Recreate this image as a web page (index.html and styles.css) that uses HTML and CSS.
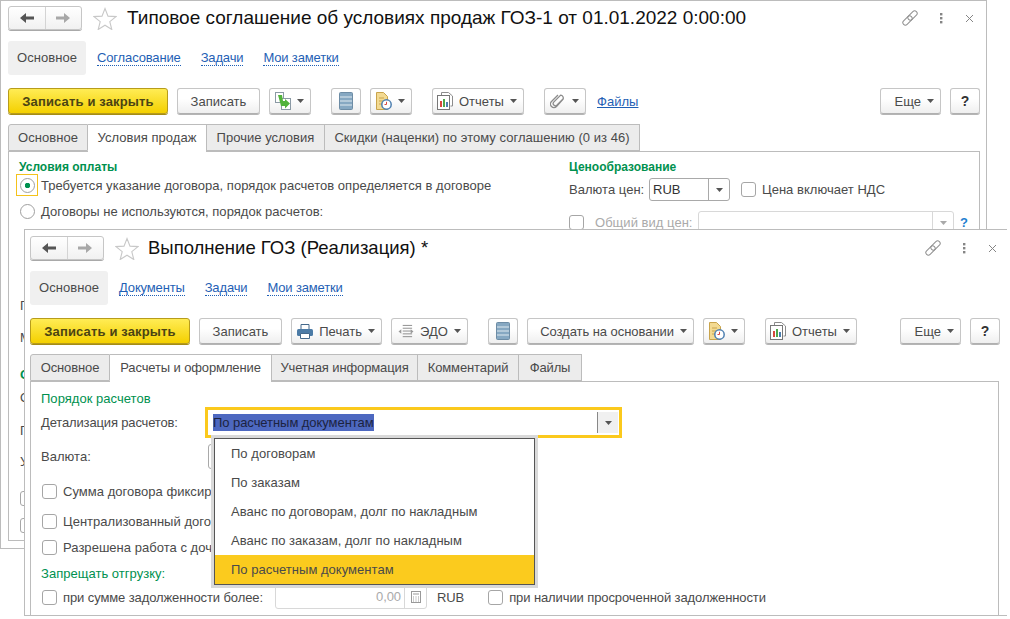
FILE: index.html
```html
<!DOCTYPE html>
<html lang="ru">
<head>
    <meta charset="UTF-8">
    <title>Выполнение ГОЗ (Реализация)</title>
    <link rel="stylesheet" href="styles.css">
</head>
<body>
    <svg class="icon-defs" width="0" height="0">
        <symbol id="i-back" viewBox="0 0 14 12"><path d="M0 6 6 1v3.400h8v3.200H6V11z"/></symbol>
        <symbol id="i-forward" viewBox="0 0 14 12"><path d="M14 6 8 1v3.400H0v3.200h8V11z"/></symbol>
        <symbol id="i-star" viewBox="0 0 24 23"><path d="M12 1.500l3 7.600 8 .5-6.200 5.100 2 7.800L12 18.200 5.200 22.500l2-7.800L1 9.600l8-.5z" fill="none" stroke="#c8c8c8" stroke-width="1.100"/></symbol>
        <symbol id="i-link" viewBox="0 0 16 16"><g fill="none" stroke="#8f8f8f"><rect x="0" y="8" width="11" height="5" rx="2.500" transform="rotate(-45 5.500 10.500)"/><rect x="5" y="3" width="11" height="5" rx="2.500" transform="rotate(-45 10.500 5.500)"/></g></symbol>
        <symbol id="i-dots" viewBox="0 0 4 12"><g fill="#858585"><rect x="1" y="1" width="2.400" height="2.400"/><rect x="1" y="5" width="2.400" height="2.400"/><rect x="1" y="9" width="2.400" height="2.400"/></g></symbol>
        <symbol id="i-close" viewBox="0 0 9 9"><path d="M1 1l7 7M8 1 1 8" stroke="#858585" fill="none" stroke-width="1"/></symbol>
        <symbol id="i-caret" viewBox="0 0 7 4"><path d="M0 0h7L3.500 4z" fill="#555"/></symbol>
        <symbol id="i-copy" viewBox="0 0 16 18"><g fill="#fff" stroke="#8b9aa5"><rect x=".5" y=".5" width="8" height="10"/><rect x="6.500" y="6.500" width="9" height="11"/></g><path d="M3 3h4l1 6h2V7l5 4.500-5 5V14H6z" fill="#52b33b"/></symbol>
        <symbol id="i-list" viewBox="0 0 14 18"><rect x=".5" y=".5" width="13" height="17" rx="1" fill="#86a8c2" stroke="#6d8ca5"/><path d="M1 5h12M1 9h12M1 13h12" stroke="#dfe9f0" stroke-width="1.200"/></symbol>
        <symbol id="i-dated" viewBox="0 0 16 18"><path d="M.5.5h7l4 4v13H.5z" fill="#f3da92" stroke="#c9a44c"/><path d="M3 6h5M3 9h4M3 12h3" stroke="#c9a44c"/><circle cx="10.500" cy="12.500" r="4.700" fill="#fff" stroke="#4d7fb0" stroke-width="1.500"/><path d="M10.500 9.800v2.700H8.500" stroke="#d9473c" fill="none"/></symbol>
        <symbol id="i-reports" viewBox="0 0 16 18"><path d="M4.500 3V.5h7l4 3.500v10h-2" fill="#fff" stroke="#8c8c8c"/><rect x=".5" y="3.500" width="12" height="14" fill="#fff" stroke="#777"/><rect x="3" y="9" width="2" height="6" fill="#d9473c"/><rect x="6" y="7" width="2" height="8" fill="#4fa64a"/><rect x="9" y="10" width="2" height="5" fill="#4d7fb0"/></symbol>
        <symbol id="i-clip" viewBox="0 0 16 16"><path d="M13.500 5.500 6.800 12.200a2.200 2.200 0 0 1-3.100-3.100l7-7a3 3 0 0 1 2.400 4L6.500 13.500a3.500 3.500 0 0 1-5-5L8 2" fill="none" stroke="#8b8b8b" stroke-width="1.300"/></symbol>
        <symbol id="i-print" viewBox="0 0 16 15"><path d="M4 .5h8v5H4z" fill="#fff" stroke="#44698c"/><rect x="0" y="5" width="16" height="7" rx="1.500" fill="#4c7ba6"/><path d="M3.500 9.500h9v5h-9z" fill="#fff" stroke="#44698c"/></symbol>
        <symbol id="i-edo" viewBox="0 0 16 16"><path d="M4.500 1.500h10M4.500 4.500h10M4.500 7.500h10M4.500 10.500h10M4.500 13.500h10" stroke="#8a8a8a"/><path d="M0 8l3-2.500v5zM16 8l-3-2.500v5z" fill="#9a9a9a"/></symbol>
        <symbol id="i-calc" viewBox="0 0 10 12"><rect x=".5" y=".5" width="9" height="11" fill="none" stroke="#999"/><path d="M2 3h6M2 6h1M4.500 6h1M7 6h1M2 8h1M4.500 8h1M7 8h1M2 10h1M4.500 10h1M7 10h1" stroke="#999"/></symbol>
    </svg>

    <!-- первое окно -->
    <section class="window window-back">
        <div class="win-head">
            <div class="nav-group">
                <button class="nav-btn"><svg class="icon-nav nav-on"><use href="#i-back"/></svg></button>
                <button class="nav-btn"><svg class="icon-nav nav-off"><use href="#i-forward"/></svg></button>
            </div>
            <svg class="icon-star"><use href="#i-star"/></svg>
            <h1 class="win-title">Типовое соглашение об условиях продаж ГОЗ-1 от 01.01.2022 0:00:00</h1>
            <div class="win-tools">
                <svg class="icon-link"><use href="#i-link"/></svg>
                <svg class="icon-dots"><use href="#i-dots"/></svg>
                <svg class="icon-close"><use href="#i-close"/></svg>
            </div>
        </div>
        <nav class="sections">
            <span class="section-current">Основное</span>
            <a class="section-link">Согласование</a>
            <a class="section-link">Задачи</a>
            <a class="section-link">Мои заметки</a>
        </nav>
        <div class="toolbar">
            <button class="btn btn-main">Записать и закрыть</button>
            <button class="btn btn-plain w-83">Записать</button>
            <button class="btn w-42"><svg class="icon-18"><use href="#i-copy"/></svg><svg class="caret"><use href="#i-caret"/></svg></button>
            <button class="btn btn-plain w-30 far"><svg class="icon-list"><use href="#i-list"/></svg></button>
            <button class="btn w-42"><svg class="icon-18"><use href="#i-dated"/></svg><svg class="caret"><use href="#i-caret"/></svg></button>
            <button class="btn w-92 far"><svg class="icon-18"><use href="#i-reports"/></svg>Отчеты<svg class="caret"><use href="#i-caret"/></svg></button>
            <button class="btn w-42 far"><svg class="icon-clip"><use href="#i-clip"/></svg><svg class="caret"><use href="#i-caret"/></svg></button>
            <a class="files-link">Файлы</a>
            <button class="btn w-61 push">Еще<svg class="caret"><use href="#i-caret"/></svg></button>
            <button class="btn btn-plain btn-help">?</button>
        </div>
        <div class="tabs">
            <span class="tab tab-w80">Основное</span>
            <span class="tab tab-active tab-w119">Условия продаж</span>
            <span class="tab tab-w118">Прочие условия</span>
            <span class="tab tab-w315">Скидки (наценки) по этому соглашению (0 из 46)</span>
        </div>
        <div class="panel panel-back">
            <div class="col-left">
                <div class="group-title group-bold">Условия оплаты</div>
                <label class="radio-row radio-row-focus"><span class="radio-focus"><span class="radio radio-on"></span></span>Требуется указание договора, порядок расчетов определяется в договоре</label>
                <label class="radio-row"><span class="radio"></span>Договоры не используются, порядок расчетов:</label>
                <div class="covered">
                    <span>П</span>
                    <span>М</span>
                    <span class="covered-green">С</span>
                    <span>О</span>
                    <span>П</span>
                    <span>У</span>
                    <span class="check"></span>
                    <span class="check"></span>
                </div>
            </div>
            <div class="col-right">
                <div class="group-title group-bold">Ценообразование</div>
                <div class="price-row">
                    <span class="label">Валюта цен:</span>
                    <div class="select select-rub"><span class="select-value">RUB</span><span class="select-btn"><svg class="caret"><use href="#i-caret"/></svg></span></div>
                    <span class="check"></span>
                    <span>Цена включает НДС</span>
                </div>
                <div class="price-row price-row-off">
                    <span class="check"></span>
                    <span class="label-off">Общий вид цен:</span>
                    <div class="select select-off"><span class="select-value"></span><span class="select-btn"><svg class="caret caret-off"><use href="#i-caret"/></svg></span></div>
                    <span class="hint">?</span>
                </div>
            </div>
        </div>
    </section>

    <!-- второе окно -->
    <section class="window window-front">
        <div class="win-head">
            <div class="nav-group">
                <button class="nav-btn"><svg class="icon-nav nav-on"><use href="#i-back"/></svg></button>
                <button class="nav-btn"><svg class="icon-nav nav-off"><use href="#i-forward"/></svg></button>
            </div>
            <svg class="icon-star"><use href="#i-star"/></svg>
            <h1 class="win-title win-title-small">Выполнение ГОЗ (Реализация) *</h1>
            <div class="win-tools">
                <svg class="icon-link"><use href="#i-link"/></svg>
                <svg class="icon-dots"><use href="#i-dots"/></svg>
                <svg class="icon-close"><use href="#i-close"/></svg>
            </div>
        </div>
        <nav class="sections">
            <span class="section-current">Основное</span>
            <a class="section-link">Документы</a>
            <a class="section-link">Задачи</a>
            <a class="section-link">Мои заметки</a>
        </nav>
        <div class="toolbar">
            <button class="btn btn-main">Записать и закрыть</button>
            <button class="btn btn-plain w-83">Записать</button>
            <button class="btn w-91"><svg class="icon-print"><use href="#i-print"/></svg>Печать<svg class="caret"><use href="#i-caret"/></svg></button>
            <button class="btn w-77"><svg class="icon-print"><use href="#i-edo"/></svg>ЭДО<svg class="caret"><use href="#i-caret"/></svg></button>
            <button class="btn btn-plain w-30 far"><svg class="icon-list"><use href="#i-list"/></svg></button>
            <button class="btn w-167 btn-tight">Создать на основании<svg class="caret"><use href="#i-caret"/></svg></button>
            <button class="btn w-42"><svg class="icon-18"><use href="#i-dated"/></svg><svg class="caret"><use href="#i-caret"/></svg></button>
            <button class="btn w-92 far"><svg class="icon-18"><use href="#i-reports"/></svg>Отчеты<svg class="caret"><use href="#i-caret"/></svg></button>
            <button class="btn w-61 push">Еще<svg class="caret"><use href="#i-caret"/></svg></button>
            <button class="btn btn-plain btn-help">?</button>
        </div>
        <div class="tabs">
            <span class="tab tab-w80">Основное</span>
            <span class="tab tab-active tab-w162">Расчеты и оформление</span>
            <span class="tab tab-w146">Учетная информация</span>
            <span class="tab tab-w101">Комментарий</span>
            <span class="tab tab-w63">Файлы</span>
        </div>
        <div class="panel panel-front">
            <div class="settle-form">
                <div class="group-title">Порядок расчетов</div>
                <div class="form-row">
                    <span class="label-wide">Детализация расчетов:</span>
                    <div class="select-focus">
                        <span class="select-value"><span class="selected-text">По расчетным документам</span></span>
                        <span class="select-btn"><svg class="caret"><use href="#i-caret"/></svg></span>
                    </div>
                </div>
                <div class="form-row">
                    <span class="label-currency">Валюта:</span>
                    <div class="select select-covered"></div>
                </div>
                <label class="form-row"><span class="check"></span>Сумма договора фиксир</label>
                <label class="form-row"><span class="check"></span>Централизованный догов</label>
                <label class="form-row"><span class="check"></span>Разрешена работа с доч</label>
                <div class="group-title">Запрещать отгрузку:</div>
                <div class="form-row form-row-debt">
                    <span class="check"></span>
                    <span class="debt-label">при сумме задолженности более:</span>
                    <div class="number-field"><span class="number-value">0,00</span><span class="number-btn"><svg class="icon-calc"><use href="#i-calc"/></svg></span></div>
                    <span class="currency">RUB</span>
                    <span class="check"></span>
                    <span>при наличии просроченной задолженности</span>
                </div>
            </div>
            <ul class="dropdown">
                <li>По договорам</li>
                <li>По заказам</li>
                <li>Аванс по договорам, долг по накладным</li>
                <li>Аванс по заказам, долг по накладным</li>
                <li class="dropdown-current">По расчетным документам</li>
            </ul>
        </div>
    </section>
</body>
</html>
```

FILE: styles.css
```css
* {
    box-sizing: border-box;
}

html, body {
    margin: 0;
    height: 619px;
    overflow: hidden;
    background: #fff;
}

body {
    font-family: "Liberation Sans", Arial, sans-serif;
    font-size: 13px;
    letter-spacing: .03px;
    color: #4a4a4a;
}

.icon-defs {
    position: absolute;
}

/* окна лежат друг на друге */
.window {
    position: absolute;
    background: #fff;
    border: 1px solid #bcbcbc;
    padding-right: 6px;
}

.window-back {
    left: 0;
    top: 0;
    width: 987px;
    height: 549px;
    padding-left: 7px;
}

.window-front {
    left: 24px;
    top: 229px;
    width: 983px;
    height: 387px;
    padding-left: 5px;
    padding-right: 7px;
    border-right: 0;
}

/* шапка */
.win-head {
    display: flex;
    align-items: center;
    height: 24px;
    margin-top: 5px;
}

.window-front .win-head {
    margin-top: 6px;
}

.nav-group {
    display: flex;
    width: 74px;
    height: 24px;
    border: 1px solid #c6c6c6;
    border-radius: 3px;
    box-shadow: 0 1px 0 #a9a9a9;
    background: linear-gradient(#fff, #f1f1f1);
}

.nav-btn {
    flex: 1;
    padding: 0;
    border: 0;
    background: none;
    display: flex;
    align-items: center;
    justify-content: center;
}

.nav-btn + .nav-btn {
    border-left: 1px solid #d4d4d4;
}

.icon-nav {
    width: 14px;
    height: 12px;
}

.nav-on {
    fill: #555;
}

.nav-off {
    fill: #a8a8a8;
}

.icon-star {
    width: 24px;
    height: 23px;
    margin-left: 11px;
}

.win-title {
    margin: 0 0 0 10px;
    font-size: 19px;
    font-weight: normal;
    letter-spacing: 0;
    color: #111;
    white-space: nowrap;
}

.win-title-small {
    margin-left: 9px;
    font-size: 18.500px;
}

.win-tools {
    display: flex;
    align-items: center;
    margin-left: auto;
}

.window-front .win-tools {
    margin-right: -3px;
}

.icon-link {
    width: 16px;
    height: 16px;
}

.icon-dots {
    width: 4px;
    height: 12px;
    margin-left: 21px;
}

.icon-close {
    width: 9px;
    height: 9px;
    margin: 0 6px 0 22px;
}

/* разделы */
.sections {
    display: flex;
    align-items: center;
    height: 34px;
    margin-top: 11px;
}

.section-current {
    width: 78px;
    height: 34px;
    line-height: 34px;
    text-align: center;
    background: #f0f0f0;
    border-radius: 3px;
    margin-right: 11px;
}

.section-link {
    margin-right: 20px;
    letter-spacing: -.15px;
    color: #1f5fb5;
    border-bottom: 1px dotted #1f5fb5;
    line-height: 14px;
}

/* кнопки */
.toolbar {
    display: flex;
    align-items: center;
    gap: 9px;
    height: 26px;
    margin-top: 13px;
}

.btn {
    display: flex;
    flex: none;
    align-items: center;
    justify-content: flex-end;
    gap: 6px;
    height: 26px;
    padding: 0 6px 0 0;
    border: 1px solid #c6c6c6;
    border-bottom-color: #b0b0b0;
    border-radius: 3px;
    box-shadow: 0 1px 0 #b5b5b5;
    background: linear-gradient(#fff 40%, #efefef);
    font: inherit;
    letter-spacing: inherit;
    color: #4a4a4a;
}

.btn-plain,
.btn-main {
    justify-content: center;
    padding: 0;
}

.btn-main {
    width: 160px;
    border-color: #b79c1b;
    box-shadow: 0 1px 0 #a58c14;
    background: linear-gradient(#ffec55, #f4d000);
    font-weight: bold;
    letter-spacing: .15px;
    color: #4b4413;
}

.btn-help {
    width: 30px;
    font-size: 14px;
    font-weight: bold;
    color: #333;
}

.btn-tight {
    letter-spacing: -.05px;
}

.far {
    margin-left: 11px;
}

.push {
    margin-left: auto;
}

.w-30 { width: 30px; }
.w-42 { width: 42px; }
.w-61 { width: 61px; }
.w-77 { width: 77px; }
.w-83 { width: 83px; }
.w-91 { width: 91px; }
.w-92 { width: 92px; }
.w-167 { width: 167px; }

.caret {
    width: 7px;
    height: 4px;
    flex: none;
}

.caret-off {
    opacity: .5;
}

.icon-18 {
    width: 16px;
    height: 18px;
}

.icon-list {
    width: 14px;
    height: 18px;
}

.icon-clip {
    width: 16px;
    height: 16px;
}

.icon-print {
    width: 16px;
    height: 15px;
}

.files-link {
    margin-left: 2px;
    color: #1f5fb5;
    text-decoration: underline;
}

/* вкладки */
.tabs {
    display: flex;
    height: 27px;
    margin-top: 10px;
}

.tab {
    height: 27px;
    line-height: 26px;
    text-align: center;
    background: #ececec;
    border: 1px solid #bcbcbc;
    border-left: 0;
    white-space: nowrap;
}

.window-front .tab {
    letter-spacing: -.12px;
}

.tab:first-child {
    border-left: 1px solid #bcbcbc;
    border-radius: 3px 0 0 0;
}

.tab-active {
    position: relative;
    z-index: 1;
    height: 28px;
    background: #fff;
    border-bottom: 0;
}

.tab-w63 { width: 63px; }
.tab-w80 { width: 80px; }
.tab-w101 { width: 101px; }
.tab-w118 { width: 118px; }
.tab-w119 { width: 119px; }
.tab-w146 { width: 146px; }
.tab-w162 { width: 162px; }
.tab-w315 { width: 315px; }

.panel {
    position: relative;
    border: 1px solid #bcbcbc;
}

.panel-back {
    display: flex;
    width: 972px;
    height: 390px;
}

.panel-front {
    width: 969px;
    height: 234px;
    border-bottom: 0;
}

.group-title {
    color: #00914f;
    line-height: 16px;
}

.group-bold {
    font-size: 12px;
    font-weight: bold;
    letter-spacing: 0;
}

/* первое окно, форма */
.col-left {
    width: 560px;
    padding: 7px 0 0 8px;
}

.col-left .group-title {
    margin-left: 2px;
}

.radio-row {
    display: flex;
    align-items: center;
    gap: 6px;
    height: 22px;
    margin-bottom: 4px;
    padding-left: 3px;
    white-space: nowrap;
}

.radio-row-focus {
    gap: 3px;
    margin-top: -1px;
    padding-left: 0;
}

.radio-focus {
    display: flex;
    align-items: center;
    justify-content: center;
    width: 22px;
    height: 22px;
    margin-left: -1px;
    border: 1px solid #f4c21b;
}

.radio {
    width: 15px;
    height: 15px;
    border: 1px solid #9f9f9f;
    border-radius: 50%;
    background: #fff;
}

.radio-on {
    background: radial-gradient(circle, #00914f 0 2.500px, #fff 3px);
}

.covered {
    display: grid;
    grid-template-rows: 20px 32px 37px 23px 33px 31px 34px 27px;
    margin-top: 74px;
    padding-left: 3px;
    line-height: 20px;
}

.covered > span {
    align-self: end;
}

.covered-green {
    color: #00914f;
    font-weight: bold;
}

.col-right {
    padding: 7px 0 0 0;
}

.price-row {
    display: flex;
    align-items: center;
    height: 23px;
    margin-top: 3px;
    white-space: nowrap;
}

.price-row .check {
    margin: 0 6px 0 11px;
}

.price-row-off {
    margin-top: 10px;
}

.price-row-off .check {
    margin: 0 11px 0 0;
}

.label {
    width: 80px;
}

.label-off {
    width: 103px;
    color: #aaa;
}

.select {
    display: flex;
    flex: none;
    height: 23px;
    border: 1px solid #a9a9a9;
    border-radius: 3px;
    background: #fff;
}

.select-rub {
    width: 81px;
    color: #333;
}

.select-off {
    width: 256px;
    border-color: #d8d8d8;
}

.select-value {
    flex: 1;
    padding-left: 3px;
    line-height: 21px;
}

.select-btn {
    width: 21px;
    display: flex;
    align-items: center;
    justify-content: center;
    border-left: 1px solid #a9a9a9;
}

.select-off .select-btn {
    border-left-color: #d8d8d8;
}

.hint {
    margin-left: 6px;
    color: #1f7fd0;
    font-weight: bold;
}

.check {
    flex: none;
    display: block;
    width: 15px;
    height: 15px;
    border: 1px solid #a6a6a6;
    border-radius: 3px;
    background: #fff;
}

/* второе окно, форма */
.settle-form {
    display: grid;
    grid-template-rows: 17px 31px 36px 34px 26px 26px 28px 18px;
    align-items: center;
    padding: 8px 0 0 10px;
}

.form-row {
    display: flex;
    align-items: center;
    white-space: nowrap;
}

.form-row > .check {
    margin: 0 6px 0 1px;
}

.form-row-debt {
    letter-spacing: -.1px;
}

.label-wide {
    width: 164px;
    letter-spacing: -.15px;
}

.label-currency {
    width: 167px;
}

.select-focus {
    display: flex;
    width: 417px;
    height: 31px;
    padding: 2px 1px 2px 5px;
    border: 3px solid #fbc91c;
    background: #fff;
    color: #333;
}

.select-focus .select-value {
    padding: 0;
    line-height: 21px;
}

.select-focus .select-btn {
    background: #f0f0f0;
    border-left-color: #888;
}

.selected-text {
    background: #4d68c0;
    color: #1c2340;
    letter-spacing: -.06px;
    padding: 1px 0;
}

.select-covered {
    width: 40px;
    height: 25px;
}

.debt-label {
    width: 212px;
}

.number-field {
    display: flex;
    width: 152px;
    height: 24px;
    border: 1px solid #d8d8d8;
    border-radius: 3px;
    color: #aaa;
}

.number-value {
    flex: 1;
    line-height: 22px;
    text-align: right;
    padding-right: 3px;
}

.number-btn {
    width: 22px;
    display: flex;
    align-items: center;
    justify-content: center;
    border-left: 1px solid #d8d8d8;
}

.icon-calc {
    width: 10px;
    height: 12px;
}

.currency {
    margin: 0 23px 0 10px;
}

.dropdown {
    position: absolute;
    left: 183px;
    top: 56px;
    width: 321px;
    margin: 0;
    padding: 0;
    list-style: none;
    background: #fff;
    border: 1px solid #555;
    box-shadow: 0 0 0 3px #d9d9d9;
}

.dropdown li {
    height: 29px;
    line-height: 29px;
    padding-left: 16px;
    white-space: nowrap;
}

.dropdown .dropdown-current {
    background: #fbcb1e;
}
```
